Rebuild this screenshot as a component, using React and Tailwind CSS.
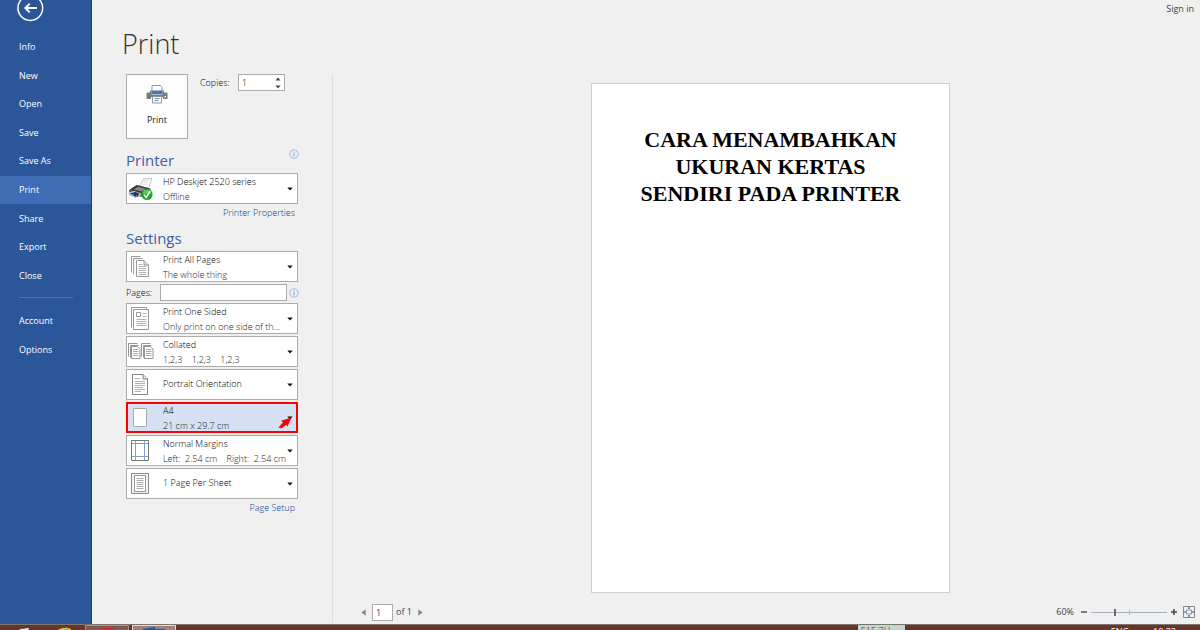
import React from "react";

const mainNav = ["Info", "New", "Open", "Save", "Save As", "Print", "Share", "Export", "Close"];
const footerNav = ["Account", "Options"];

function NavItem({ label, active }) {
  return (
    <a
      href={"#" + label.toLowerCase().replace(" ", "-")}
      aria-current={active ? "page" : undefined}
      className={
        active
          ? "flex items-center bg-[#3e6db5] pl-[19px] text-white"
          : "flex items-center pl-[19px] text-white"
      }
    >
      {label}
    </a>
  );
}

function Sidebar() {
  return (
    <nav
      aria-label="File"
      className="flex w-[92px] shrink-0 flex-col overflow-hidden border-r border-[#124078] bg-[#2b579a] text-[9px] leading-3 font-medium"
    >
      <button type="button" aria-label="Back" className="-mt-[6px] ml-4 h-7 w-7">
        <svg viewBox="0 0 28 28" className="h-7 w-7" fill="none" stroke="#fff">
          <circle cx="14.300" cy="14" r="12.4" strokeWidth="1.5" />
          <path d="M21 14H9.500M13.700 9.6 9.300 14l4.4 4.4" strokeWidth="1.9" />
        </svg>
      </button>
      <div className="mt-[11px] grid h-[257px] auto-rows-fr">
        {mainNav.map((n) => (
          <NavItem key={n} label={n} active={n === "Print"} />
        ))}
      </div>
      <hr className="mt-[7px] mr-[18px] ml-[19px] border-[#4a75b5]" />
      <div className="mt-[9px] grid h-[57px] auto-rows-fr">
        {footerNav.map((n) => (
          <NavItem key={n} label={n} />
        ))}
      </div>
    </nav>
  );
}

function InfoIcon() {
  return (
    <svg viewBox="0 0 10 10" className="h-[10px] w-[10px]" fill="none">
      <circle cx="5" cy="5" r="4.2" stroke="#8fb2e0" strokeWidth="0.9" />
      <path d="M5 4.3V7.3M5 2.5v1" stroke="#6c9bd8" strokeWidth="1" />
    </svg>
  );
}

function PrintIcon() {
  return (
    <svg viewBox="0 0 22 20" className="h-5 w-[22px]" fill="none">
      <path d="M6 7V1.5h8.500L16 3.500V7" fill="#fff" stroke="#8a8a8a" strokeWidth="0.9" />
      <path d="M.5 9.500Q.5 8.500 1.500 8.500H4V6.500h1.500v4h11v-4H18v2h2.500Q21.500 8.500 21.500 9.500v5.500h-4.500v-2H5v2H.5z" fill="#7c7c7c" />
      <path d="M5.500 6.500h11v3.500h-11z" fill="#3e78b8" />
      <path d="M18.500 12h1.500v1.500h-1.500z" fill="#fff" />
      <path d="M6.500 12.500h9v6.500h-9z" fill="#fff" stroke="#8a8a8a" strokeWidth="0.9" />
      <path d="M8.500 14.700h5M8.500 16.700h4" stroke="#5b8cc4" />
    </svg>
  );
}

function DeskjetIcon() {
  return (
    <svg viewBox="0 0 28 24" className="h-6 w-7">
      <path d="M12.500 9 16.500 2l8.500-.800-3.500 10.300z" fill="#fafafa" stroke="#a8a8a8" strokeWidth="0.7" />
      <path d="M17 4l5-.6M16 6l5-.6M15 8l5-.6" stroke="#d2d2d2" strokeWidth="0.6" />
      <path d="M2 13 9.500 8l14 3.500v4L14 20 2 16.500z" fill="#5b5f63" />
      <path d="M3 12.700 10 8.300l12.500 3.200-7 4.500z" fill="#33373b" />
      <path d="M6.500 12.500 11 9.700l8 2-4.500 2.800z" fill="#85898d" />
      <path d="M1.500 15.500 7 14l7 2.500-1 3-5 1.500-6.500-3z" fill="#b9c8d6" />
      <path d="M3 16.500 8 15l4 1.600-1 2.600-3 .3z" fill="#1c2c42" />
      <path d="M4 17.200l2.500-.8 1 2z" fill="#35a2e6" />
      <path d="M8.500 17l2 .8-.8 1.800z" fill="#2d7fd0" />
      <circle cx="20" cy="17.500" r="5.600" fill="#1faa25" />
      <path d="M15.500 16a4.700 4.700 0 0 1 9 0q-4.500 2.500-9 0z" fill="#58cf53" />
      <path d="M17 17.700l2.300 2.700 3.700-6" fill="none" stroke="#fff" strokeWidth="1.700" />
    </svg>
  );
}

function AllPagesIcon() {
  return (
    <svg viewBox="0 0 28 24" className="h-6 w-7" fill="none" stroke="#8a8a8a" strokeWidth="0.9">
      <path d="M4.500 17.500v-16h9M6.700 19.500v-16h9" />
      <path d="M9.500 5.500h7.500l4.500 4.500v11.500h-12z" fill="#fff" />
      <path d="M17 5.500V10h4.500" fill="#ddd" />
      <path d="M11.500 9.500h4M11.500 11.500h8M11.500 13.500h8M11.500 15.500h8M11.500 17.500h8M11.500 19.500h8" stroke="#a9a9a9" />
    </svg>
  );
}

function OneSidedIcon() {
  return (
    <svg viewBox="0 0 28 24" className="h-6 w-7" fill="none" stroke="#8a8a8a" strokeWidth="0.9">
      <path d="M4.500 20.500v-20h15v1.500" />
      <path d="M6.500 2.500h15v20h-15z" fill="#fff" />
      <path d="M9.500 5.500h4v4h-4z" />
      <path d="M15.500 6.500h4M15.500 9.500h4M9.500 12.500h10M9.500 14.500h10M9.500 16.500h10M9.500 18.500h10" stroke="#a9a9a9" />
    </svg>
  );
}

function CollatedIcon() {
  return (
    <svg viewBox="0 0 28 24" className="h-6 w-7" fill="none" stroke="#8a8a8a" strokeWidth="0.9">
      {[0, 13].map((x) => (
        <g key={x} transform={`translate(${x} 0)`}>
          <path d="M1.500 16.500v-13h9M3.500 17.500v-12h8" />
          <path d="M4.500 6.500h6l2.500 2.500v9.500H4.500z" fill="#fff" />
          <path d="M6 9.500h5M6 11.500h5.500M6 13.500h5.500M6 15.500h5.500" stroke="#a0a0a0" />
        </g>
      ))}
    </svg>
  );
}

function PortraitIcon() {
  return (
    <svg viewBox="0 0 28 24" className="h-6 w-7" fill="none" stroke="#777" strokeWidth="0.9">
      <path d="M5.500 1.500h10.500l4.500 4.500v15.500h-15z" fill="#fff" />
      <path d="M16 1.500V6h4.500" fill="#ddd" />
      <path d="M8 5.500h5M8 8.500h10M8 10.500h10M8 12.500h10M8 14.500h8M8 16.500h10M8 18.500h6" stroke="#a9a9a9" />
    </svg>
  );
}

function PaperIcon() {
  return (
    <svg viewBox="0 0 28 24" className="h-6 w-7" fill="none">
      <rect x="6.500" y="2.500" width="13" height="18" rx="0.800" fill="#fff" stroke="#a6a6a6" />
    </svg>
  );
}

function MarginsIcon() {
  return (
    <svg viewBox="0 0 28 24" className="h-6 w-7" fill="none">
      <path d="M4.500 1.500h17v20h-17z" fill="#fff" stroke="#777" />
      <path d="M8.500 2v19M17.500 2v19M5 4.500h16M5 17.500h16" stroke="#7fa3d0" />
    </svg>
  );
}

function SheetIcon() {
  return (
    <svg viewBox="0 0 28 24" className="h-6 w-7" fill="none">
      <path d="M4.500 1.500h17v20h-17z" fill="#f3f3f3" stroke="#8a8a8a" />
      <path d="M7.500 3.500h11v16h-11z" fill="#fff" stroke="#8a8a8a" strokeWidth="0.9" />
      <path d="M9.500 6.500h7M9.500 8.500h7M9.500 10.500h7M9.500 12.500h7M9.500 14.500h7M9.500 16.500h7" stroke="#a9a9a9" />
    </svg>
  );
}

function Picker({ label, title, detail, icon, highlighted }) {
  return (
    <div
      className={
        highlighted
          ? "relative grid h-[31px] border border-[#ff0000] bg-[#d5e1f2] outline-2 -outline-offset-2 outline-[#ff0000]"
          : "relative grid h-[31px] border border-[#ababab] bg-white"
      }
    >
      <select
        aria-label={label}
        className={
          detail
            ? "h-full w-full appearance-none bg-transparent pb-[14px] pl-9 text-[9px] leading-3 text-black [grid-area:1/1]"
            : "h-full w-full appearance-none bg-transparent pb-[2px] pl-9 text-[9px] leading-3 text-black [grid-area:1/1]"
        }
      >
        <option>{title}</option>
      </select>
      <div className="pointer-events-none flex items-center [grid-area:1/1]">
        {icon}
        {detail && (
          <span className="ml-2 self-end text-[9px] leading-3 whitespace-pre text-[#222]">{detail}</span>
        )}
        <svg viewBox="0 0 6 4" className="mr-1 ml-auto h-1 w-1.5 shrink-0">
          <path d="M.3.500h5.400L3 3.500z" fill="#111" />
        </svg>
      </div>
      {highlighted && (
        <svg viewBox="0 0 14 12" className="pointer-events-none absolute right-[5px] bottom-[3px] h-3 w-[14px]">
          <path d="M13.500.5 9.500 9.500 8.300 7.700 3.500 11.500.5 10.500 5 5.200 3 3.700z" fill="#ff0000" />
        </svg>
      )}
    </div>
  );
}

function SettingsPanel() {
  return (
    <section className="flex w-[172px] shrink-0 flex-col text-[9px] leading-3 font-light text-black">
      <div className="flex items-start">
        <button
          type="button"
          className="flex h-[65px] w-[62px] flex-col items-center border border-[#ababab] bg-[#fdfdfd] pt-[9px] font-normal text-[#222]"
        >
          <PrintIcon />
          <span className="mt-[10px]">Print</span>
        </button>
        <label htmlFor="copies" className="mt-[3px] ml-3">
          Copies:
        </label>
        <div className="mr-[13px] ml-auto flex h-[17px] w-[47px] items-center border border-[#ababab] bg-white">
          <input id="copies" type="text" inputMode="numeric" defaultValue="1" className="w-0 flex-1 pl-[3px]" />
          <div className="mr-[3px] flex flex-col gap-1">
            <button type="button" aria-label="More copies" className="h-1 w-1.5">
              <svg viewBox="0 0 6 4" className="block h-1 w-1.5"><path d="M.5 3.500h5L3 .5z" fill="#444" /></svg>
            </button>
            <button type="button" aria-label="Fewer copies" className="h-1 w-1.5">
              <svg viewBox="0 0 6 4" className="block h-1 w-1.5"><path d="M.5.500h5L3 3.500z" fill="#444" /></svg>
            </button>
          </div>
        </div>
      </div>

      <div className="mt-[9px] flex h-[25px] items-start justify-between">
        <h2 className="text-[15px] leading-6 font-normal text-[#3a62a4]">Printer</h2>
        <button type="button" aria-label="Printer status" className="mt-px -mr-px h-[10px] w-[10px]">
          <InfoIcon />
        </button>
      </div>
      <Picker label="Printer" title="HP Deskjet 2520 series" detail="Offline" icon={<DeskjetIcon />} />
      <a href="#printer-properties" className="mt-[3px] mr-[3px] self-end text-[#003a94]">
        Printer Properties
      </a>

      <h2 className="mt-[7px] mb-px text-[15px] leading-6 font-normal text-[#3a62a4]">Settings</h2>
      <div className="flex flex-col gap-[2px]">
        <Picker label="Print range" title="Print All Pages" detail="The whole thing" icon={<AllPagesIcon />} />
        <div className="flex h-[17px] items-center">
          <label htmlFor="pages" className="w-[34px]">
            Pages:
          </label>
          <input id="pages" type="text" className="h-[17px] w-0 flex-1 border border-[#ababab] bg-white px-1" />
          <button type="button" aria-label="About page ranges" className="-mr-px ml-[2px] h-[10px] w-[10px]">
            <InfoIcon />
          </button>
        </div>
        <Picker label="Sides" title="Print One Sided" detail="Only print on one side of th..." icon={<OneSidedIcon />} />
        <Picker label="Collation" title="Collated" detail={"1,2,3    1,2,3    1,2,3"} icon={<CollatedIcon />} />
        <Picker label="Orientation" title="Portrait Orientation" icon={<PortraitIcon />} />
        <Picker label="Paper size" title="A4" detail="21 cm x 29.7 cm" icon={<PaperIcon />} highlighted />
        <Picker label="Margins" title="Normal Margins" detail={"Left:  2.54 cm    Right:  2.54 cm"} icon={<MarginsIcon />} />
        <Picker label="Pages per sheet" title="1 Page Per Sheet" icon={<SheetIcon />} />
      </div>
      <a href="#page-setup" className="mt-[3px] mr-[3px] self-end text-[#003a94]">
        Page Setup
      </a>
    </section>
  );
}

function PreviewFooter() {
  return (
    <footer className="mt-auto flex h-[22px] items-center pr-[5px] pl-7 text-[9px] leading-3 text-[#444]">
      <button type="button" aria-label="Previous page" className="h-[7px] w-[5px]">
        <svg viewBox="0 0 5 7" className="block h-[7px] w-[5px]"><path d="M4.700.3v6.400L.3 3.500z" fill="#888" /></svg>
      </button>
      <input
        aria-label="Current page"
        type="text"
        defaultValue="1"
        className="ml-1.5 h-[17px] w-[21px] border border-[#ababab] bg-white pl-[3px] text-[#6a3a70]"
      />
      <span className="ml-[3px]">of 1</span>
      <button type="button" aria-label="Next page" className="ml-[6px] h-[7px] w-[5px]">
        <svg viewBox="0 0 5 7" className="block h-[7px] w-[5px]"><path d="M.3.300v6.400l4.400-3.200z" fill="#888" /></svg>
      </button>
      <span className="ml-auto">60%</span>
      <button type="button" aria-label="Zoom out" className="ml-[6px] h-2 w-2">
        <svg viewBox="0 0 8 8" className="block h-2 w-2"><path d="M1 4h6" stroke="#555" strokeWidth="1.500" /></svg>
      </button>
      <svg viewBox="0 0 76 10" className="ml-[3px] h-[10px] w-[76px]">
        <path d="M0 5.500h76" stroke="#a3b0bf" />
        <path d="M38.500 3v5" stroke="#b5b5b5" />
        <path d="M24 2v7" stroke="#444" strokeWidth="1.500" />
      </svg>
      <button type="button" aria-label="Zoom in" className="ml-[3px] h-2 w-2">
        <svg viewBox="0 0 8 8" className="block h-2 w-2"><path d="M1 4h6M4 1v6" stroke="#444" strokeWidth="1.500" /></svg>
      </button>
      <button type="button" aria-label="Zoom to page" className="ml-[5px] h-3 w-3">
        <svg viewBox="0 0 12 12" className="block h-3 w-3" fill="none">
          <path d="M.5.500h11v11H.5z" stroke="#888" />
          <path d="M3.500 4h5v4h-5z" stroke="#8a8a8a" strokeWidth="0.900" />
          <path d="M5 2h2M5 10h2M2 5v2M10 5v2" stroke="#3e78b8" strokeWidth="1.300" />
        </svg>
      </button>
    </footer>
  );
}

function Taskbar() {
  return (
    <div className="flex h-1.5 shrink-0 items-start overflow-hidden border-t border-[#7b7672] bg-[#693526] text-[9px] leading-[9px]">
      <svg viewBox="0 0 85 6" className="h-1.5 w-[85px] shrink-0">
        <path d="M16 6l5-2 8-1-1 3z" fill="#f1ece8" />
        <path d="M56 6q6-4 12-3 4 .5 3 3z" fill="#f3c52f" />
        <path d="M60 6q3-2 8-2v2z" fill="#4ba3d8" />
      </svg>
      <svg viewBox="0 0 44 6" className="h-1.5 w-11 shrink-0">
        <path d="M.5 6V.5h43V6" fill="#86584c" stroke="#a98e85" />
        <path d="M13 6q9-6 19 0z" fill="#e8202b" />
      </svg>
      <svg viewBox="0 0 45 6" className="ml-[3px] h-1.5 w-[45px] shrink-0">
        <path d="M.5 6V.5h43V6" fill="#a08078" stroke="#e4d8d3" />
        <path d="M11 6V4l12-2v2h10v2z" fill="#2456a5" />
      </svg>
      <div className="ml-auto h-1.5 w-[47px] overflow-hidden bg-[#c5d5d0] pt-px pl-[3px] text-[#80675c]">515.7H</div>
      <div className="mr-6 ml-[206px] flex gap-6 pt-[2px] text-white">
        <span>ENG</span>
        <span>10:33</span>
      </div>
    </div>
  );
}

export default function App() {
  return (
    <div className="flex min-h-screen flex-col bg-[#f0f0f0] font-['Open_Sans','Noto_Sans',sans-serif]">
      <div className="flex flex-1">
        <Sidebar />
        <div className="flex flex-1 flex-col">
          <header className="flex h-[74px] items-start justify-between pr-[6px] pl-[30px]">
            <h1 className="pt-[24px] text-[27px] leading-10 font-light text-[#333]">Print</h1>
            <a href="#sign-in" className="pt-[3px] text-[9px] leading-3 text-[#444]">
              Sign in
            </a>
          </header>
          <div className="flex flex-1 pl-[34px]">
            <SettingsPanel />
            <main className="mt-px mb-px ml-[34px] flex flex-1 flex-col border-l border-[#dedede]">
              <article className="mt-2 ml-[8px] h-[510px] w-[359px] self-center border border-[#cfcfcf] bg-white pt-[42px] text-center font-['Liberation_Serif',serif] text-[22px] leading-[27px] font-bold text-black">
                CARA MENAMBAHKAN
                <br />
                UKURAN KERTAS
                <br />
                SENDIRI PADA PRINTER
              </article>
              <PreviewFooter />
            </main>
          </div>
        </div>
      </div>
      <Taskbar />
    </div>
  );
}
